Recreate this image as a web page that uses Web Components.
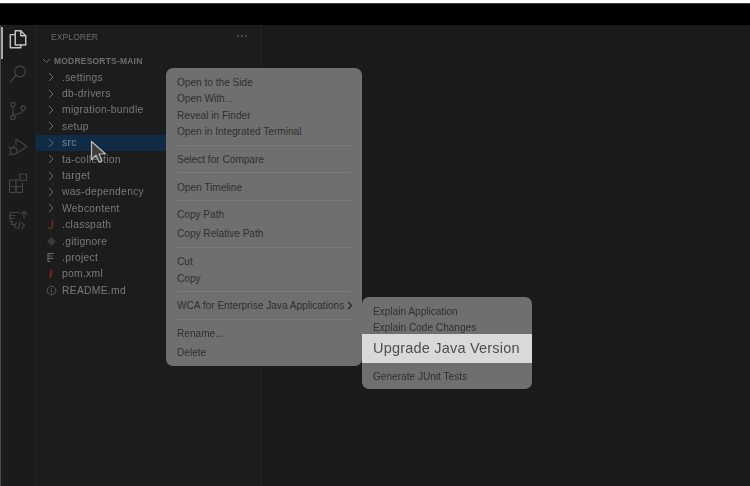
<!DOCTYPE html>
<html><head><meta charset="utf-8"><title>Explorer</title>
<style>html,body{margin:0;padding:0;background:#fff;width:750px;height:486px;overflow:hidden}</style>
</head><body>
<vs-app>
  <vs-activity slot="activity"></vs-activity>
  <vs-explorer slot="explorer">
    <vs-row kind="root">MODRESORTS-MAIN</vs-row>
    <vs-row kind="folder">.settings</vs-row>
    <vs-row kind="folder">db-drivers</vs-row>
    <vs-row kind="folder">migration-bundle</vs-row>
    <vs-row kind="folder">setup</vs-row>
    <vs-row kind="folder" selected>src</vs-row>
    <vs-row kind="folder">ta-collection</vs-row>
    <vs-row kind="folder">target</vs-row>
    <vs-row kind="folder">was-dependency</vs-row>
    <vs-row kind="folder">Webcontent</vs-row>
    <vs-row kind="java">.classpath</vs-row>
    <vs-row kind="git">.gitignore</vs-row>
    <vs-row kind="project">.project</vs-row>
    <vs-row kind="maven">pom.xml</vs-row>
    <vs-row kind="info">README.md</vs-row>
  </vs-explorer>
  <vs-menu slot="overlay" style="left:166px;top:68px;width:196px">
    <vs-item>Open to the Side</vs-item>
    <vs-item>Open With...</vs-item>
    <vs-item>Reveal in Finder</vs-item>
    <vs-item>Open in Integrated Terminal</vs-item>
    <vs-sep></vs-sep>
    <vs-item>Select for Compare</vs-item>
    <vs-sep></vs-sep>
    <vs-item>Open Timeline</vs-item>
    <vs-sep></vs-sep>
    <vs-item>Copy Path</vs-item>
    <vs-item gap>Copy Relative Path</vs-item>
    <vs-sep></vs-sep>
    <vs-item>Cut</vs-item>
    <vs-item>Copy</vs-item>
    <vs-sep></vs-sep>
    <vs-item more>WCA for Enterprise Java Applications</vs-item>
    <vs-sep></vs-sep>
    <vs-item>Rename...</vs-item>
    <vs-item gap>Delete</vs-item>
  </vs-menu>
  <vs-menu slot="overlay" style="left:362px;top:297px;width:170px;padding-bottom:4px">
    <vs-item>Explain Application</vs-item>
    <vs-item>Explain Code Changes</vs-item>
    <vs-item big>Upgrade Java Version</vs-item>
    <vs-item>Generate JUnit Tests</vs-item>
  </vs-menu>
  <vs-cursor slot="overlay"></vs-cursor>
</vs-app>
<script>
function shadow(el, html){ el.attachShadow({mode:'open'}).innerHTML = html; }
const icon = (d, extra='') => `<svg width="22" height="22" viewBox="0 0 22 22" fill="none" stroke="currentColor" stroke-width="1.2" stroke-linejoin="round" stroke-linecap="round" ${extra}>${d}</svg>`;

customElements.define('vs-app', class extends HTMLElement {
  constructor(){ super(); shadow(this, `<style>
    :host{display:flex;flex-direction:column;position:relative;width:750px;height:486px;overflow:hidden;background:#fff;
      font-family:"Liberation Sans",Arial,sans-serif}
    .wrap{display:flex;flex-direction:column;flex:1;margin-top:3px;min-height:0;filter:blur(.6px)}
    .top{height:22px;background:#000;border-top:1px solid #3a3a3a;box-sizing:border-box}
    .main{flex:1;display:flex;min-height:0;background:#1b1b1b;border-left:1px solid #4a4a4a}
    .editor{flex:1;background:#1a1a1a}
    .over{position:absolute;inset:0;filter:blur(.6px)}
  </style>
  <div class="wrap"><div class="top"></div>
    <div class="main"><slot name="activity"></slot><slot name="explorer"></slot><div class="editor"></div></div>
  </div>
  <div class="over"><slot name="overlay"></slot></div>`); }
});

customElements.define('vs-activity', class extends HTMLElement {
  constructor(){ super(); shadow(this, `<style>
    :host{display:flex;flex-direction:column;align-items:center;width:35px;flex:none;box-sizing:border-box;padding-top:3px;gap:14px;
      background:#1b1b1b;color:#444;position:relative;border-right:1px solid #202020}
    svg{display:block;flex:none}
    .on{color:#c4c4c4;transform:scale(1.1);stroke-width:1.3}
    .bar{position:absolute;left:0;top:2px;width:1.5px;height:32px;background:#aaa}
  </style>
  <div class="bar"></div>
  ${icon('<path d="M8.500 3.500h5l4.500 4.500v8.500h-9.500z"/><path d="M13.500 3.500v4.500h4.500"/><path d="M8.500 7h-4.500v12h9.500v-2.500"/>','class="on"')}
  ${icon('<circle cx="13" cy="7.500" r="5.300"/><path d="M9.200 11.300l-6.200 6.700"/>')}
  ${icon('<circle cx="6" cy="4.500" r="2.200"/><circle cx="6" cy="17.500" r="2.200"/><circle cx="16" cy="8" r="2.200"/><path d="M6 6.700v8.600"/><path d="M16 10.200c0 3-5 3.200-10 5"/>')}
  ${icon('<path d="M9 3l11 7.500-9 6"/><path d="M9 3v6"/><circle cx="6.500" cy="15" r="3.400"/><path d="M2 11l2 1.500M2 19l2-1.500M6.500 9.500v2"/>')}
  ${icon('<rect x="2.500" y="8" width="6.500" height="6.500"/><rect x="2.500" y="14.500" width="6.500" height="6"/><rect x="9" y="14.500" width="6.500" height="6"/><rect x="13" y="2" width="6.500" height="6.500"/><path d="M9 8h3M15.500 11v3.500"/>')}
  ${icon('<path d="M3 12V4.500h9"/><path d="M3 7.500h5M3 10.500h4"/><path d="M3 13.500h3l-2 3h3"/><path d="M17 4v6"/><path d="M9.500 15l-2.500 2.500 2.500 2.500M15 15l2.500 2.500-2.500 2.500M13 14l-1.500 7"/><path d="M14 6l3-2.500 3 2.500"/>')}
  `); }
});

customElements.define('vs-explorer', class extends HTMLElement {
  constructor(){ super(); shadow(this, `<style>
    :host{display:flex;flex-direction:column;width:226px;flex:none;box-sizing:border-box;background:#1c1c1c;border-right:1px solid #212121;color:#777}
    header{display:flex;justify-content:space-between;align-items:center;height:22px;margin-top:1px;padding:0 13px 0 15px;
      font-size:8.500px;letter-spacing:.1px;color:#6b6b6b}
    .dots{font-size:10px;font-weight:700;letter-spacing:.4px;line-height:8px;color:#666}
    .list{display:flex;flex-direction:column;margin-top:4.500px}
  </style><header><span>EXPLORER</span><span class="dots">···</span></header><div class="list"><slot></slot></div>`); }
});

const kinds = {
  folder:`<svg width="8" height="10" viewBox="0 0 8 10" fill="none" stroke="#6a6a6a" stroke-width="1" style="margin-left:1px"><path d="M2 1l4 4-4 4"/></svg>`,
  root:`<svg width="9" height="8" viewBox="0 0 9 8" fill="none" stroke="#6a6a6a" stroke-width="1"><path d="M1 2l3.500 3.500L8 2"/></svg>`,
  java:`<svg width="10" height="12" viewBox="0 0 10 12" fill="none" stroke="#6b2a2a" stroke-width="1.400"><path d="M6.500 1v6.500c0 2-3 2.500-4 1"/></svg>`,
  git:`<svg width="11" height="11" viewBox="0 0 11 11"><rect x="2.300" y="2.300" width="6.400" height="6.400" transform="rotate(45 5.500 5.500)" fill="#3a3a3a"/></svg>`,
  project:`<svg width="10" height="11" viewBox="0 0 10 11" fill="none" stroke="#666" stroke-width="1.200"><path d="M2 1.500h6M2 4h4.500M2 6.500h5.500M2 9.500h2.500M2 1v9"/></svg>`,
  maven:`<svg width="10" height="12" viewBox="0 0 10 12"><path d="M5.800 1c1 2 .8 6-1.600 10-1.500-2-1.200-7 1.600-10z" fill="#6e2426"/></svg>`,
  info:`<svg width="11" height="11" viewBox="0 0 11 11" fill="none" stroke="#4e5b4e" stroke-width="1"><circle cx="5.500" cy="5.500" r="4.300"/><path d="M5.500 5v3M5.500 3v1"/></svg>`
};
customElements.define('vs-row', class extends HTMLElement {
  constructor(){ super();
    const k = this.getAttribute('kind');
    shadow(this, `<style>
      :host{display:flex;align-items:center;height:16.420px;box-sizing:border-box;padding-left:${k==='root'?'6px':'10px'};color:#7a7a7a;
        font-size:10.300px;letter-spacing:.3px;white-space:nowrap}
      :host([kind=root]){font-size:8.500px;font-weight:700;letter-spacing:.2px;color:#6e6e6e}
      :host([selected]){background:#0f2b45;color:#7d8790}
      .i{display:flex;justify-content:flex-start;align-items:center;width:${k==='root'?'12px':'16px'};flex:none}
    </style><span class="i">${kinds[k]}</span><slot></slot>`);
  }
});

customElements.define('vs-menu', class extends HTMLElement {
  constructor(){ super(); shadow(this, `<style>
    :host{display:flex;flex-direction:column;position:absolute;box-sizing:border-box;padding:6px 0 5px;background:#6f6f6f;border-radius:7px;color:#303030;
      font-size:10.100px}
  </style><slot></slot>`); }
});
customElements.define('vs-item', class extends HTMLElement {
  constructor(){ super(); shadow(this, `<style>
    :host{display:flex;align-items:center;height:16.420px;padding:0 11px;white-space:nowrap;gap:3px}
    :host([gap]){margin-top:2.600px}
    :host([big]){box-sizing:border-box;height:29px;padding-bottom:2px;margin-top:-1.800px;margin-bottom:5.500px;background:#d9d9d9;color:#4e4e4e;font-size:14.500px;letter-spacing:.2px;font-weight:400}
    svg{flex:none}
  </style><span><slot></slot></span>${this.hasAttribute('more')?'<svg width="6" height="9" viewBox="0 0 6 9" fill="none" stroke="#2c2c2c" stroke-width="1.400"><path d="M1 1l3.500 3.500L1 8"/></svg>':''}`); }
});
customElements.define('vs-sep', class extends HTMLElement {
  constructor(){ super(); shadow(this, `<style>
    :host{display:block;height:11.400px;box-sizing:border-box;padding:5px 11px 0}
    div{height:1px;background:#7a7a7a}
  </style><div></div>`); }
});
customElements.define('vs-cursor', class extends HTMLElement {
  constructor(){ super(); shadow(this, `<style>
    :host{display:block;position:absolute;left:90px;top:140px;width:18px;height:25px}
  </style><svg width="18" height="25" viewBox="0 0 18 25"><path d="M1.500 1.500v18l4.500-4.300 3 6.800 3-1.300-3-6.700h6.500z" fill="#3d3d3d" stroke="#bdbdbd" stroke-width="1.200" stroke-linejoin="round"/></svg>`); }
});
</script>
</body></html>
